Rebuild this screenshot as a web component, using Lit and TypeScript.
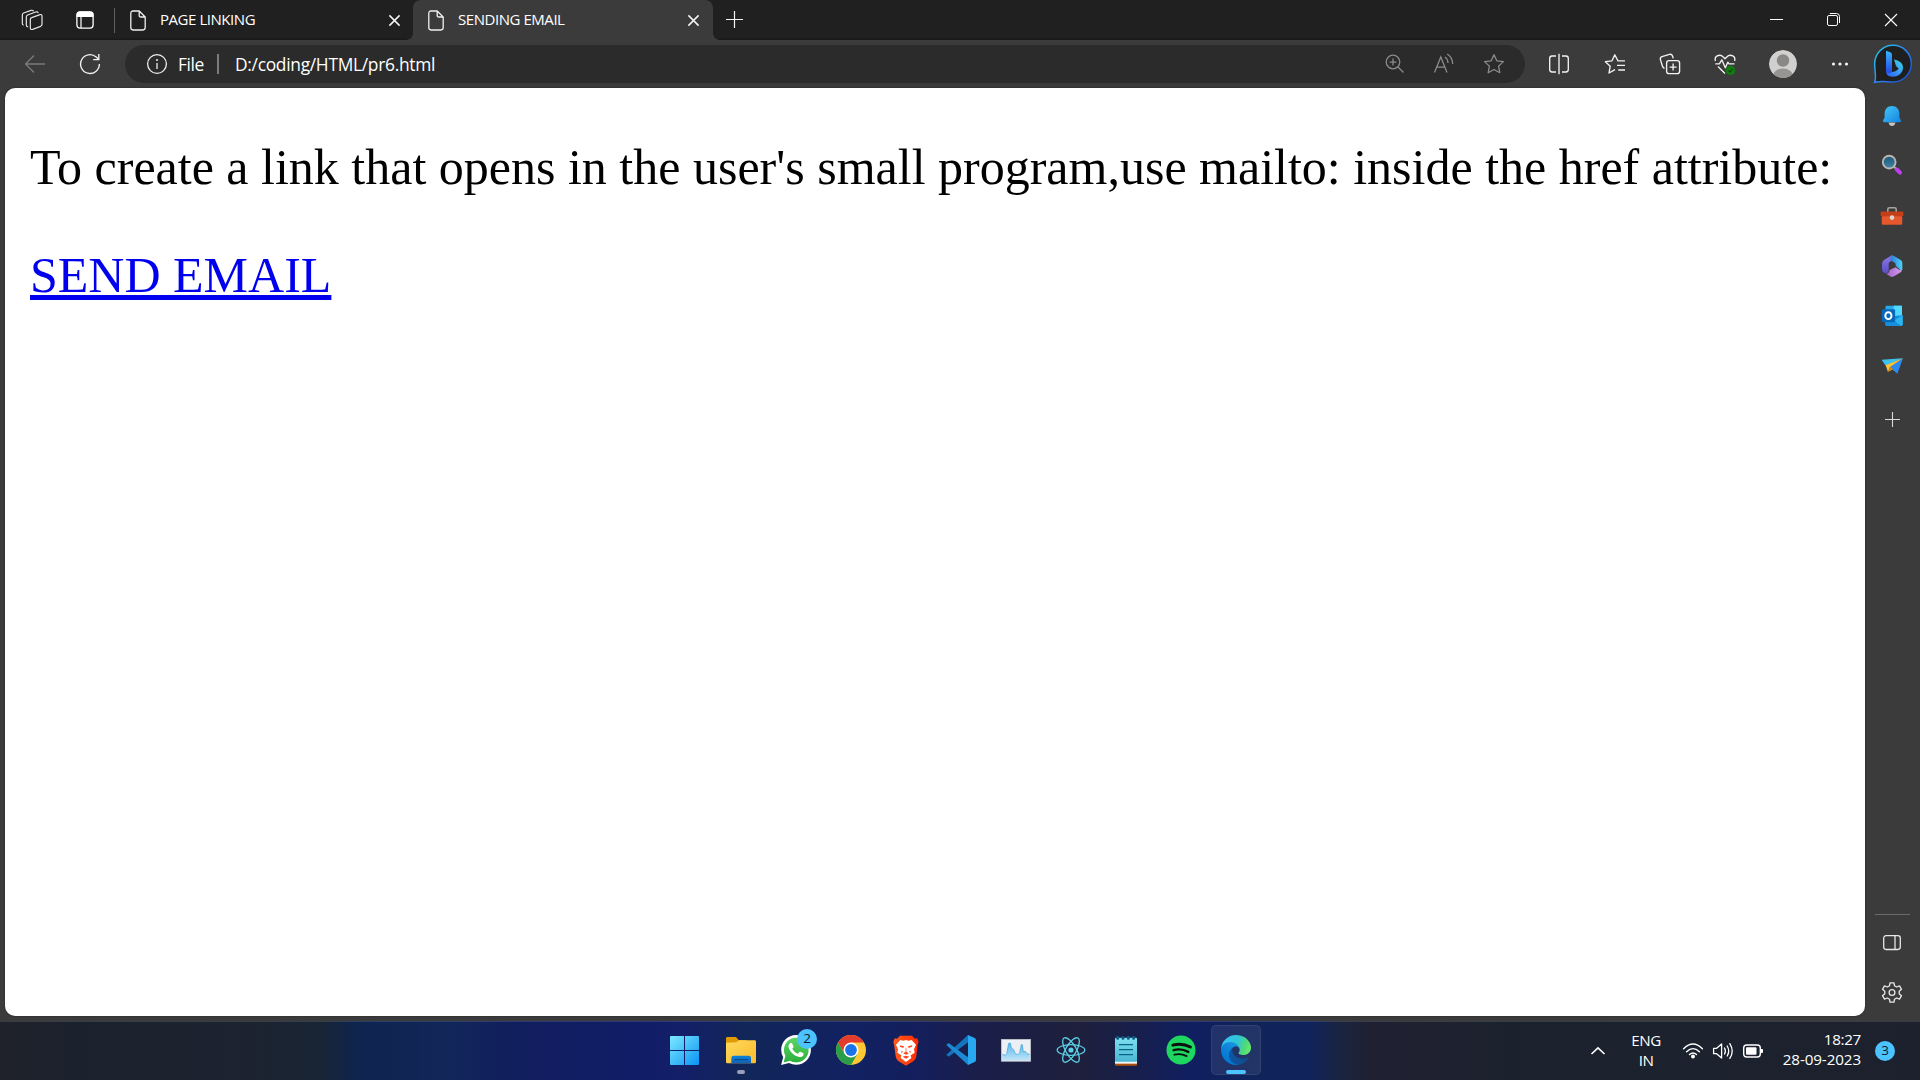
import { LitElement, html, css, svg, SVGTemplateResult } from "lit";
import { customElement } from "lit/decorators.js";

const icon = (w: number, h: number, box: string, body: SVGTemplateResult) =>
  html`<svg class="ic" width=${w} height=${h} viewBox=${box} fill="none">${body}</svg>`;

/* ---------- title bar ---------- */
const workspaces = icon(22, 22, "64 27 66 66", svg`<g stroke="#e4e4e4" stroke-width="3.6" stroke-linejoin="round" stroke-linecap="round">
  <path d="M92 58 Q92 54 96 53 L121 44 Q127 42 127 48 L127 73 Q127 77 123 79 L99 88 Q92 90 92 84 Z"/>
  <path d="M84 80 Q80 80 80 75 L80 51 Q80 47 84 45 L108 36 Q114 34 115 38"/>
  <path d="M71 75 Q68 75 68 69 L68 45 Q68 41 72 39 L94 31 Q100 30 101 33"/></g>`);
const tabActions = icon(18, 18, "0 0 18 18", svg`<rect x=".9" y=".9" width="16.2" height="16.2" rx="3" stroke="#fff" stroke-width="1.3"/>
  <path d="M.5 4Q.5.5 4 .5H14Q17.5.5 17.5 4V6H.5Z" fill="#fff"/><path d="M5 6V17" stroke="#fff" stroke-width="1.2"/>`);
const fileIcon = icon(16, 21, "0 0 16 21", svg`<path d="M3 1H9.2L15.2 7V17.6Q15.2 20 13 20H3Q.8 20 .8 17.6V3.4Q.8 1 3 1ZM9.2 1V5.4Q9.2 7 10.8 7H15.2" stroke="#f0f0f0" stroke-width="1.3" stroke-linejoin="round"/>`);
const closeIcon = icon(13, 13, "0 0 13 13", svg`<path d="M1.4 1.4L11.6 11.6M11.6 1.4L1.4 11.6" stroke="#f4f4f4" stroke-width="1.5"/>`);
const plusIcon = icon(17, 17, "0 0 17 17", svg`<path d="M8.500 0V17M0 8.500H17" stroke="#f4f4f4" stroke-width="1.200"/>`);
const minIcon = icon(13, 13, "0 0 13 13", svg`<path d="M0 6.5H13" stroke="#fff"/>`);
const maxIcon = icon(13, 13, "0 0 13 13", svg`<rect x=".5" y="2.5" width="10" height="10" rx="1.6" stroke="#fff"/><path d="M2.8.5H9.5Q12.5.5 12.5 3.5V10" stroke="#fff"/>`);
const winClose = icon(14, 14, "0 0 14 14", svg`<path d="M1 1L13 13M13 1L1 13" stroke="#fff" stroke-width="1.1"/>`);

/* ---------- toolbar ---------- */
const backIcon = icon(22, 20, "0 0 22 20", svg`<path d="M21 10H1.6M10 1.5L1.6 10L10 18.5" stroke="#7b7b7b" stroke-width="1.3"/>`);
const reloadIcon = icon(22, 22, "0 0 22 22", svg`<path d="M20.4 11A9.4 9.4 0 1 1 17.2 4L19.6 6.3M19.8 1V6.6H14.2" stroke="#f2f2f2" stroke-width="1.35"/>`);
const infoIcon = icon(22, 22, "0 0 22 22", svg`<circle cx="11" cy="11" r="9.4" stroke="#eee" stroke-width="1.3"/><path d="M11 10V16" stroke="#eee" stroke-width="1.3"/><circle cx="11" cy="7" r="1" fill="#eee"/>`);
const zoomIcon = icon(20, 20, "0 0 20 20", svg`<g stroke="#8c8c8c" stroke-width="1.25"><circle cx="8" cy="8" r="6.8"/><path d="M13 13L18.5 18.5M8 4.6V11.4M4.6 8H11.4"/></g>`);
const readIcon = icon(22, 22, "0 0 22 22", svg`<g stroke="#8c8c8c" stroke-width="1.25"><path d="M1.500 19.500L7.800 4L14 19.500M3.800 14H11.800M12 4Q14.900 6 15 10M14.200 1Q19.500 4.200 19.700 11"/></g>`);
const starIcon = icon(22, 22, "0 0 22 22", svg`<path d="M11 1.8L13.8 7.8L20.4 8.6L15.6 13.1L16.8 19.7L11 16.5L5.2 19.7L6.4 13.1L1.6 8.6L8.2 7.8Z" stroke="#8c8c8c" stroke-width="1.3" stroke-linejoin="round"/>`);
const splitIcon = icon(22, 22, "0 0 22 22", svg`<path d="M8 3H4Q1.7 3 1.7 5.4V16.6Q1.7 19 4 19H8M14 3H18Q20.3 3 20.3 5.4V16.6Q20.3 19 18 19H14M11 .8V21.2" stroke="#f2f2f2" stroke-width="1.35"/>`);
const favIcon = icon(22, 22, "0 0 22 22", svg`<path d="M14 8L10.8 1.8L8 7.8L1.4 8.7L6.2 13.2L5 20L11 16.6M13.4 7.8H21M13 12.4H21M14.2 17H21" stroke="#f2f2f2" stroke-width="1.35" stroke-linejoin="round"/>`);
const collIcon = icon(22, 22, "0 0 22 22", svg`<g stroke="#f2f2f2" stroke-width="1.35"><rect x="7.6" y="7.6" width="13" height="13" rx="2.4"/><path d="M14.1 10.6V17.6M10.6 14.1H17.6M5.6 15.4Q4 15 3.4 13L1.4 6.6Q.9 4.4 3 3.6L10.4 1.3Q12.8.8 13.5 3L14.2 5.4"/></g>`);
const heartIcon = icon(24, 24, "0 0 24 24", svg`<g stroke="#f2f2f2" stroke-width="1.35" stroke-linejoin="round"><path d="M2.4 9Q1.4 5.4 4.2 3.9Q7.6 2.2 10 4.8L12 6.8L14 4.8Q16.4 2.2 19.8 3.9Q22.6 5.4 21.6 9"/><path d="M2.3 11.8H6.4L8.8 7.8L12.3 15.8L14.8 10.2L16 11.8H21.5M5 14.6L12 21.6"/></g><circle cx="17.5" cy="18.4" r="4.7" fill="#107c10"/><path d="M15.4 18.6L17 20L19.6 16.9" stroke="#123f12" stroke-width="1.1"/>`);
const avatar = icon(28, 28, "0 0 28 28", svg`<defs><clipPath id="av"><circle cx="14" cy="14" r="14"/></clipPath></defs><g clip-path="url(#av)"><circle cx="14" cy="14" r="14" fill="#d2d0ce"/><circle cx="14" cy="10.5" r="6.2" fill="#8a8886"/><ellipse cx="14" cy="26.4" rx="10.2" ry="8" fill="#979593"/></g>`);
const dots = icon(18, 6, "0 0 18 6", svg`<g fill="#f2f2f2"><circle cx="2.5" cy="3" r="1.6"/><circle cx="9" cy="3" r="1.6"/><circle cx="15.5" cy="3" r="1.6"/></g>`);
const bing = icon(40, 40, "369 18 120 120", svg`<defs>
  <linearGradient id="bo" x1="0" y1="0" x2="1" y2="0.9"><stop offset="0" stop-color="#20d0e8"/><stop offset=".45" stop-color="#2d8ff4"/><stop offset="1" stop-color="#1748cf"/></linearGradient>
  <linearGradient id="bs" x1="0" y1="0" x2="0" y2="1"><stop offset="0" stop-color="#36b6fb"/><stop offset="1" stop-color="#2547e4"/></linearGradient>
  <linearGradient id="bb" x1="0" y1="1" x2="1" y2="0"><stop offset="0" stop-color="#2b5cf0"/><stop offset=".55" stop-color="#3aa0fa"/><stop offset="1" stop-color="#35ded8"/></linearGradient></defs>
  <path d="M374 133C380 118 374 101 374 77A55 55 0 1 1 429.500 132C410 132 400 127 374 133Z" fill="#1f1f1f" stroke="url(#bo)" stroke-width="4.500"/>
  <path d="M432 64C448 69 459 75 459 89C459 106 443 116 427 116C416 116 409 111 409 103C409 97 414 97 421 101C429 104 437 100 446 92L438 84Z" fill="url(#bb)"/>
  <path d="M408 38L421 43Q426 45 426 50V103Q417 108 408 103Z" fill="url(#bs)"/>`);

/* ---------- sidebar ---------- */
const bell = icon(22, 24, "0 0 22 24", svg`<defs><linearGradient id="bl" x1="0" y1="0" x2="1" y2="1"><stop stop-color="#42c8fa"/><stop offset="1" stop-color="#1583de"/></linearGradient></defs>
  <path d="M7.500 18.5H14.500Q13.600 22 11 22T7.500 18.500Z" fill="#c8c6c4"/><path d="M11 2C6.400 2 3.600 5.400 3.600 9.800V13.600L2 16.600Q1.700 18.200 3.200 18.200H18.800Q20.300 18.200 20 16.600L18.400 13.600V9.800C18.400 5.400 15.600 2 11 2Z" fill="url(#bl)"/>`);
const searchIc = icon(22, 22, "0 1.2 22 22", svg`<defs><linearGradient id="sg" x1="0" y1="0" x2="0" y2="1"><stop stop-color="#1e5474"/><stop offset="1" stop-color="#3f87aa"/></linearGradient></defs>
  <path d="M12.500 12.500L15.500 15.500" stroke="#aaa" stroke-width="2"/><circle cx="8.200" cy="8.300" r="6.400" fill="url(#sg)" stroke="#b9b5b2" stroke-width="1.900"/><path d="M15.800 15.700L19 18.800" stroke="#c23cf4" stroke-width="4" stroke-linecap="round"/>`);
const toolbox = icon(24, 20, "0 0 24 20", svg`<path d="M7.800 6V3.400Q7.800 1.800 9.400 1.800H14.600Q16.200 1.800 16.200 3.400V6" stroke="#a8a4a2" stroke-width="1.600"/>
  <rect x="1.800" y="10" width="20.400" height="8.800" rx="1.200" fill="#e5572c"/><rect x=".6" y="5.600" width="22.800" height="4.600" rx="1.200" fill="#c43f17"/><circle cx="12" cy="11.600" r="2.300" fill="#d9d5d2"/>`);
const m365 = icon(22, 22, "125 523 64 66", svg`<defs><linearGradient id="ma" x1="0" y1="0" x2="0" y2="1"><stop stop-color="#8b7be8"/><stop offset="1" stop-color="#5b4cc4"/></linearGradient><linearGradient id="mb"><stop stop-color="#2b7bd8"/><stop offset="1" stop-color="#4fd2f6"/></linearGradient><linearGradient id="mc"><stop stop-color="#a463c8"/><stop offset="1" stop-color="#d09af0"/></linearGradient></defs>
  <path d="M157 524L134 537Q127 541 127 549V566Q127 573 133 576L141 578Q147 577 147 568V549Q147 545 151 543L158 539Z" fill="url(#ma)"/>
  <path d="M157 524Q160 524 163 526L183 538Q188 541 188 548V567Q186 572 182 567L168 555V551Q168 548 165 546L155 540Q148 534 157 524Z" fill="url(#mb)"/>
  <path d="M186 569Q186 573 183 575L163 587Q157 590 151 587L139 579Q147 581 150 568L168 560Q180 570 186 569Z" fill="url(#mc)"/>`);
const outlook = icon(22, 22, "125 676 64 64", svg`<rect x="138" y="678" width="48" height="34" rx="3" fill="#28a8ea"/><rect x="162" y="678" width="24" height="30" fill="#50d9ff"/><rect x="138" y="700" width="25" height="14" fill="#0f66b8"/>
  <path d="M137 710L188 706V732Q188 737 183 737H141Q137 737 137 732Z" fill="#1490df"/><path d="M188 706L163 721L184 737Q188 736 188 732Z" fill="#2cb4ee"/><rect x="127" y="688" width="39" height="38" rx="4" fill="#0767b9"/><ellipse cx="146.500" cy="707" rx="9" ry="10" stroke="#fff" stroke-width="5.500"/>`);
const plane = icon(22, 18, "122 831 66 52", svg`<path d="M124 838L188 834L136 856Z" fill="#3ec3ef"/><path d="M188 834L171 880L148 860Z" fill="#2b8af0"/><path d="M188 834L136 855L143 875L149 860Z" fill="#ffc53a"/><path d="M143 875L149 860L159 867Z" fill="#d28a10"/>`);
const sidePlus = icon(15, 15, "0 0 15 15", svg`<path d="M7.500 0V15M0 7.500H15" stroke="#d8d8d8" stroke-width="1.100"/>`);
const panelIc = icon(18, 16, "0 .5 18 16", svg`<rect x=".7" y="1.2" width="16.600" height="13.800" rx="2.400" stroke="#e8e8e8" stroke-width="1.300"/><path d="M12 1.200V15" stroke="#e8e8e8" stroke-width="1.300"/>`);
const gear = icon(22, 22, "0 .5 22 22", svg`<g stroke="#e8e8e8" stroke-width="1.300" stroke-linejoin="round"><path d="M9 1.300H13L13.500 4.300L15.600 5.500L18.500 4.400L20.500 7.800L18.200 9.800V12.200L20.500 14.200L18.500 17.600L15.600 16.500L13.500 17.700L13 20.700H9L8.500 17.700L6.400 16.500L3.500 17.600L1.500 14.200L3.800 12.200V9.800L1.500 7.800L3.500 4.400L6.400 5.500L8.500 4.300Z"/><circle cx="11" cy="11" r="2.900"/></g>`);

/* ---------- taskbar ---------- */
const start = icon(29, 29, "0 0 29 29", svg`<defs><linearGradient id="st" x1="0" y1="0" x2="29" y2="29" gradientUnits="userSpaceOnUse"><stop stop-color="#7deaff"/><stop offset="1" stop-color="#0a93f5"/></linearGradient></defs><path d="M1 0H14V14H0V1Q0 0 1 0ZM15 0H28Q29 0 29 1V14H15ZM0 15H14V29H1Q0 29 0 28ZM15 15H29V28Q29 29 28 29H15Z" fill="url(#st)"/>`);
const explorer = icon(30, 30, "258 75 90 90", svg`<defs><linearGradient id="ex" x1="0" y1="0" x2="1" y2="1"><stop stop-color="#ffd95c"/><stop offset="1" stop-color="#fbbb2c"/></linearGradient><linearGradient id="ey" x1="0" y1="0" x2="0" y2="1"><stop stop-color="#0b84dc"/><stop offset="1" stop-color="#1162b4"/></linearGradient></defs>
  <path d="M258 85Q258 81 262 81H285Q289 81 291 84L296 90H320V108H258Z" fill="#e09a05"/><path d="M258 98L290 97L297 91H344Q348 91 348 95V156Q348 160 344 160H262Q258 160 258 156Z" fill="url(#ex)"/><path d="M274 160V144Q274 137 281 137H326Q333 137 333 144V160Z" fill="url(#ey)"/><path d="M283 149H324" stroke="#0a4583" stroke-width="3"/>`);
const whatsapp = icon(30, 30, "0 0 24 24", svg`<defs><linearGradient id="wa" x1="0" y1="0" x2="0" y2="1"><stop stop-color="#5dd566"/><stop offset="1" stop-color="#2aaf3c"/></linearGradient></defs>
  <path d="M.057 24l1.687-6.163a11.867 11.867 0 01-1.587-5.946C.16 5.335 5.495 0 12.050 0a11.820 11.820 0 018.413 3.488 11.820 11.820 0 013.480 8.414c-.003 6.557-5.338 11.892-11.893 11.892a11.900 11.900 0 01-5.688-1.448L.057 24z" fill="#fff"/><path d="M2.100 22L3.500 16.700A9.900 9.900 0 1 1 7.300 20.600Z" fill="url(#wa)"/>
  <path fill="#fff" d="M17.472 14.382c-.297-.149-1.758-.867-2.030-.967-.273-.099-.471-.148-.670.150-.197.297-.767.966-.940 1.164-.173.199-.347.223-.644.075-.297-.150-1.255-.463-2.390-1.475-.883-.788-1.480-1.761-1.653-2.059-.173-.297-.018-.458.130-.606.134-.133.298-.347.446-.520.149-.174.198-.298.298-.497.099-.198.050-.371-.025-.520-.075-.149-.669-1.612-.916-2.207-.242-.579-.487-.500-.669-.510-.173-.008-.371-.010-.570-.010-.198 0-.520.074-.792.372-.272.297-1.040 1.016-1.040 2.479 0 1.462 1.065 2.875 1.213 3.074.149.198 2.096 3.200 5.077 4.487.709.306 1.262.489 1.694.625.712.227 1.360.195 1.871.118.571-.085 1.758-.719 2.006-1.413.248-.694.248-1.289.173-1.413-.074-.124-.272-.198-.570-.347"/>`);
const chrome = icon(30, 30, "0 0 30 30", svg`<circle cx="15" cy="15" r="15" fill="#fcc934"/><path d="M2 7.500A15 15 0 0 1 28 7.500H15L8.500 18.750Z" fill="#e33b2e"/><path d="M2 7.500A15 15 0 0 0 15 30L21.500 18.750L15 22.500L8.500 18.750Z" fill="#2a9d48"/><circle cx="15" cy="15" r="7.500" fill="#fff"/><circle cx="15" cy="15" r="5.900" fill="#1a73e8"/>`);
const brave = icon(26, 31, "759 73 78 93", svg`<defs><linearGradient id="br"><stop stop-color="#ff5a20"/><stop offset="1" stop-color="#ff2a00"/></linearGradient></defs>
  <path d="M780 75H816L825 84L832 83L836 94L833 101L829 137Q828 146 821 151L798 165L775 151Q768 146 767 137L762 101L760 94L764 83L771 84Z" fill="url(#br)"/>
  <path d="M781 88L790 90L798 88L806 90L815 88L828 102L822 116L824 126L812 134L814 142L798 154L782 142L784 134L772 126L774 116L768 102Z" fill="#fff"/>
  <path d="M779 104L792 107L790 112L780 108ZM817 104L804 107L806 112L816 108ZM797 111H799L799 123L806 128L798 132L790 128L797 123ZM785 120L789 123L784 128ZM811 120L807 123L812 128ZM788 138L798 135L808 138L798 144Z" fill="#ff431a"/>`);
const vscode = icon(30, 30, "918 75 90 90", svg`<path d="M919 134L926 140L984 97V75Z" fill="#1376bd"/><path d="M919 105L926 99L984 142V165Z" fill="#1b8ad2"/><path d="M984 75L1004 84Q1008 86 1008 91V149Q1008 154 1004 156L984 165Z" fill="#29a8f2"/>`);
const perf = icon(30, 23, "123 86 90 69", svg`<defs><linearGradient id="pf" x1="0" y1="0" x2="0" y2="1"><stop stop-color="#52b7ec"/><stop offset="1" stop-color="#bfe3f7"/></linearGradient></defs><rect x="124.500" y="87.500" width="87" height="65" fill="#eceff3" stroke="#b9bec5" stroke-width="3"/><path d="M127 132L136 135L140 130L146 99L151 98L154 113L161 118L166 130L173 133L179 127L184 103L187 103L190 125L196 123L201 130L209 132V150H127Z" fill="url(#pf)"/><path d="M127 132L136 135L140 130L146 99L151 98L154 113L161 118L166 130L173 133L179 127L184 103L187 103L190 125L196 123L201 130L209 132" stroke="#3f9fd8" stroke-width="2"/>`);
const react = icon(30, 30, "-15 -15 30 30", svg`<circle r="2.600" fill="#5ccfe6"/><g stroke="#5ccfe6" stroke-width="1.300"><ellipse rx="13.800" ry="5.300"/><ellipse rx="13.800" ry="5.300" transform="rotate(60)"/><ellipse rx="13.800" ry="5.300" transform="rotate(120)"/></g>`);
const notepad = icon(24, 31, "462 73 72 93", svg`<defs><linearGradient id="np" x1="0" y1="0" x2="0" y2="1"><stop stop-color="#7fe0f2"/><stop offset="1" stop-color="#48b6d4"/></linearGradient></defs><rect x="465" y="146" width="66" height="19" rx="3" fill="#a9520c"/><rect x="465" y="140" width="66" height="19" fill="#f4f4f4"/><rect x="465" y="81" width="66" height="72" rx="3" fill="url(#np)"/>
  <path d="M473 80V83M489 80V83M505 80V83M521 80V83" stroke="#0c5d80" stroke-width="9" stroke-linecap="round"/><path d="M477 102H519M477 117H519M477 132H519" stroke="#0a6488" stroke-width="4"/>`);
const spotify = icon(30, 30, "0 0 30 30", svg`<circle cx="15" cy="15" r="14.500" fill="#1ed760"/><g stroke="#0b0f0d" stroke-linecap="round"><path d="M6.800 10.200Q16 7.600 24.400 12" stroke-width="2.900"/><path d="M7.600 15.200Q15.200 13 22.300 16.900" stroke-width="2.400"/><path d="M8.400 19.700Q15 18 20.600 21.100" stroke-width="1.900"/></g>`);
const edge = icon(30, 30, "4.600 4.900 256 256", svg`<defs><linearGradient id="e1" x1="63" y1="178" x2="241" y2="178" gradientUnits="userSpaceOnUse"><stop stop-color="#0c59a4"/><stop offset="1" stop-color="#114a8b"/></linearGradient><linearGradient id="e2" x1="140" y1="60" x2="45" y2="230" gradientUnits="userSpaceOnUse"><stop stop-color="#1b9de2"/><stop offset=".35" stop-color="#1288da"/><stop offset="1" stop-color="#0078d4"/></linearGradient><linearGradient id="e3" x1="20" y1="60" x2="250" y2="140" gradientUnits="userSpaceOnUse"><stop stop-color="#35c1f1"/><stop offset=".5" stop-color="#2fc6d4"/><stop offset=".8" stop-color="#52da74"/><stop offset="1" stop-color="#66eb6e"/></linearGradient></defs>
  <path fill="url(#e1)" d="M235.680 195.460a93.730 93.730 0 0 1-10.540 4.710 101.870 101.870 0 0 1-35.900 6.460c-47.320 0-88.540-32.550-88.540-74.320A31.480 31.480 0 0 1 117.130 105c-42.800 1.800-53.800 46.400-53.800 72.530 0 73.880 68.090 81.370 82.760 81.370 7.910 0 19.840-2.300 27-4.560l1.310-.44a128.340 128.340 0 0 0 66.600-52.800 4 4 0 0 0-5.320-5.640z"/>
  <path fill="url(#e2)" d="M110.340 246.340A79.200 79.200 0 0 1 87.600 225a80.720 80.720 0 0 1 29.530-120c3.120-1.470 8.450-4.130 15.540-4a32.350 32.350 0 0 1 25.690 13 31.880 31.880 0 0 1 6.360 18.660c0-.21 24.460-79.600-80-79.600-43.900 0-80 41.660-80 78.210a130.150 130.150 0 0 0 12.110 56 128 128 0 0 0 156.380 67.110 75.550 75.550 0 0 1-62.780-8z"/>
  <path fill="url(#e3)" d="M156.940 153.780c-.81 1.050-3.300 2.500-3.300 5.660 0 2.610 1.700 5.120 4.720 7.230 14.380 10 41.490 8.680 41.560 8.680a59.560 59.560 0 0 0 30.270-8.350A61.380 61.380 0 0 0 260.630 114.100c.26-22.410-8-37.310-11.340-43.910C228.090 28.760 182.350 4.920 132.610 4.920a128 128 0 0 0-128 126.200c.48-36.540 36.800-66.050 80-66.050 3.500 0 23.460.34 42 10.070 16.340 8.580 24.900 18.940 30.850 29.210 6.180 10.670 7.280 24.150 7.280 29.520 0 5.370-2.740 13.330-7.800 19.910z"/>`);

const chevron = icon(16, 10, "0 0 16 10", svg`<path d="M1.500 8L8 1.800L14.500 8" stroke="#fff" stroke-width="1.600"/>`);
const wifi = icon(22, 18, "0 0 22 18", svg`<g stroke="#fff" stroke-width="1.400" stroke-linecap="round"><path d="M1.600 6.800Q11-2.600 20.400 6.800M4.600 9.800Q11 3.400 17.400 9.800M7.500 12.600Q11 9.200 14.500 12.600"/></g><circle cx="11" cy="14.600" r="2" fill="#fff"/>`);
const volume = icon(22, 18, "0 0 22 18", svg`<g stroke="#fff" stroke-width="1.300" stroke-linejoin="round" stroke-linecap="round"><path d="M1.600 6.300H4.600L9.600 2V16L4.600 11.700H1.600Z"/><path d="M12.500 6Q14.300 9 12.500 12M15.200 4Q18.200 9 15.200 14M17.800 1.600Q22.600 9 17.800 16.400"/></g>`);
const battery = icon(22, 16, "0 0 22 16", svg`<rect x="1.700" y="2" width="16.600" height="12" rx="3" stroke="#fff" stroke-width="1.400"/><rect x="4" y="4.300" width="10.500" height="7.400" rx="1" fill="#fff"/><path d="M19 6H20.200Q21 6 21 7V9Q21 10 20.200 10H19Z" fill="#fff"/>`);

@customElement("app-root")
export class AppRoot extends LitElement {
  static styles = css`
    :host { display: block; width: 1920px; height: 1080px; overflow: hidden; }
    * { box-sizing: border-box; }
    .ic { display: block; flex: none; overflow: visible; }
    .screen { width: 1920px; height: 1080px; display: flex; flex-direction: column; background: #3b3b3b; color: #fff; font-family: "Open Sans", "Noto Sans", sans-serif; }
    .cell { display: flex; align-items: center; justify-content: center; flex: none; height: 100%; }
    .strip { height: 40px; flex: none; display: flex; background: #202020; box-shadow: inset 0 -2px 2px -1px #181818; }
    .w65 { width: 64px; margin-right: 1px; } .w40 { width: 40px; } .w43 { width: 43px; height: 39px; } .w57 { width: 57px; height: 39px; } .w58 { width: 58px; height: 39px; }
    .w70 { width: 70px; } .w56 { width: 56px; } .w54 { width: 54px; } .w60 { width: 60px; } .w52 { width: 52px; }
    .tabsep { width: 1px; height: 25px; margin: 8px 0 0 9px; background: #5f5f5f; }
    .tab { display: flex; align-items: center; height: 40px; width: 298px; padding: 0 12px 0 15px; font-size: 15px; }
    .tab.active { width: 300px; padding-right: 13.5px; background: #3b3b3b; border-radius: 8px 8px 0 0; position: relative; }
    .tab.active::before, .tab.active::after { content: ""; position: absolute; bottom: 0; width: 6px; height: 6px; }
    .tab.active::before { left: -6px; background: radial-gradient(circle at 0 0, #202020 5.500px, #3b3b3b 6px); }
    .tab.active::after { right: -6px; background: radial-gradient(circle at 100% 0, #202020 5.500px, #3b3b3b 6px); }
    .title { flex: 1; margin-left: 14px; padding-bottom: 2px; line-height: 20px; white-space: nowrap; letter-spacing: -0.450px; }
    .spacer { flex: 1; }
    .toolbar { height: 48px; flex: none; display: flex; }
    .address { width: 1400px; height: 38px; margin: 5px 6px 0 15px; border-radius: 19px; background: #2b2b2b; display: flex; align-items: center; padding: 0 20px 0 21px; font-size: 17.400px; line-height: 24px; }
    .file { margin-left: 10px; width: 39px; letter-spacing: -0.400px; padding-bottom: 1px; }
    .asep { width: 2px; height: 20px; background: #7d7d7d; margin-right: 16px; }
    .url { flex: 1; letter-spacing: -0.300px; padding-bottom: 1px; }
    .acts { display: flex; gap: 28px; align-items: center; }
    .main { height: 933px; flex: none; display: flex; padding-left: 5px; }
    .page { width: 1860px; height: 928px; background: #fff; border-radius: 10px; padding: 50px 25px; color: #000; font: 50px/58px "Liberation Serif", "Times New Roman", serif; white-space: nowrap; box-shadow: 0 0 2px #222; }
    .page p { margin: 0 0 50px; }
    .page a { color: #0000ee; text-decoration: underline; text-decoration-thickness: 5px; text-underline-offset: 3px; text-decoration-skip-ink: none; }
    .side { width: 54px; display: flex; flex-direction: column; padding-top: 3px; align-items: center; }
    .sc { height: 50px; display: flex; align-items: center; flex: none; }
    .sc.add { height: 57px; }
    .sline { width: 35px; height: 1px; background: #6b6b6b; margin-bottom: 3px; }
    .side .sc:last-child { margin-bottom: 3px; }
    .taskbar { height: 59px; flex: none; display: flex; border-top: 1px solid rgba(255,255,255,.12);
      background: linear-gradient(90deg, #20222b 0, #1b222d 80px, #1d2330 240px, #192535 320px, #0f244f 360px, #122659 450px, #111e5e 520px, #111d66 640px, #131f68 680px, #122658 745px, #112162 850px, #141f5c 920px, #1a1e4b 970px, #1e203c 1080px, #181f4a 1130px, #101f60 1190px, #10245a 1260px, #10235a 1310px, #1a2440 1340px, #1f2133 1370px, #202130 1430px, #1b222e 1500px, #1c212d 1920px); }
    .apps { display: flex; padding-left: 658px; }
    .app { width: 50px; height: 50px; margin: 3px 5px 0 0; display: flex; align-items: center; justify-content: center; position: relative; border-radius: 5px; }
    .app:first-child { width: 53px; }
    .app.on { background: rgba(255,255,255,.08); box-shadow: inset 0 0 0 1px rgba(255,255,255,.07); }
    .ind { position: absolute; bottom: 1px; left: 15px; width: 20px; height: 4px; border-radius: 2px; background: #4cc2ff; }
    .ind.small { left: 21px; width: 8px; background: #9b9fb8; }
    .badge { width: 20px; height: 20px; border-radius: 50%; background: #4cc2ff; color: #0b1a2a; font-size: 13.500px; line-height: 19px; letter-spacing: 0; text-align: center; }
    .app .badge { position: absolute; left: 26px; top: 4px; }
    .tray { display: flex; margin-left: auto; align-items: center; padding: 0 25px 1px 0; font-size: 15.200px; line-height: 20px; letter-spacing: -0.300px; }
    .lang { width: 40px; text-align: center; margin: 0 16px 0 20px; padding-bottom: 2px; letter-spacing: -0.500px; }
    .sys { display: flex; gap: 8px; align-items: center; margin-right: 20px; }
    .clock { text-align: right; width: 77px; margin-right: 14px; padding-bottom: 3px; white-space: nowrap; display: flex; flex-direction: column; align-items: flex-end; }
    .clock span:last-child { letter-spacing: -0.100px; }
  `;

  render() {
    const cell = (w: string, i: unknown) => html`<div class="cell ${w}">${i}</div>`;
    const tab = (t: string, active = false) => html`<div class="tab ${active ? "active" : ""}">${fileIcon}<span class="title">${t}</span>${closeIcon}</div>`;
    const apps: [unknown, unknown?, string?][] = [
      [start], [explorer, html`<i class="ind small"></i>`], [whatsapp, html`<span class="badge">2</span>`],
      [chrome], [brave], [vscode], [perf], [react], [notepad], [spotify], [edge, html`<i class="ind"></i>`, "on"],
    ];
    return html`<div class="screen">
      <div class="strip">
        ${cell("w65", workspaces)}${cell("w40", tabActions)}<div class="tabsep"></div>
        ${tab("PAGE LINKING")}${tab("SENDING EMAIL", true)}
        ${cell("w43", plusIcon)}<div class="spacer"></div>
        ${cell("w57", minIcon)}${cell("w57", maxIcon)}${cell("w58", winClose)}
      </div>
      <div class="toolbar">
        ${cell("w70", backIcon)}${cell("w40", reloadIcon)}
        <div class="address">${infoIcon}<span class="file">File</span><span class="asep"></span><span class="url">D:/coding/HTML/pr6.html</span>
          <div class="acts">${zoomIcon}${readIcon}${starIcon}</div></div>
        ${cell("w56", splitIcon)}${cell("w56", favIcon)}${cell("w54", collIcon)}${cell("w56", heartIcon)}
        ${cell("w60", avatar)}${cell("w54", dots)}${cell("w52", bing)}
      </div>
      <div class="main">
        <div class="page"><p>To create a link that opens in the user's small program,use mailto: inside the href attribute:</p><a>SEND EMAIL</a></div>
        <div class="side">
          ${[bell, searchIc, toolbox, m365, outlook, plane].map((i) => html`<div class="sc">${i}</div>`)}
          <div class="sc add">${sidePlus}</div><div class="spacer"></div><div class="sline"></div>
          <div class="sc">${panelIc}</div><div class="sc">${gear}</div>
        </div>
      </div>
      <div class="taskbar">
        <div class="apps">${apps.map(([i, extra, on]) => html`<div class="app ${on ?? ""}">${i}${extra ?? ""}</div>`)}</div>
        <div class="tray">${chevron}
          <div class="lang">ENG<br />IN</div>
          <div class="sys">${wifi}${volume}${battery}</div>
          <div class="clock"><span>18:27</span><span>28-09-2023</span></div>
          <span class="badge">3</span>
        </div>
      </div>
    </div>`;
  }
}
